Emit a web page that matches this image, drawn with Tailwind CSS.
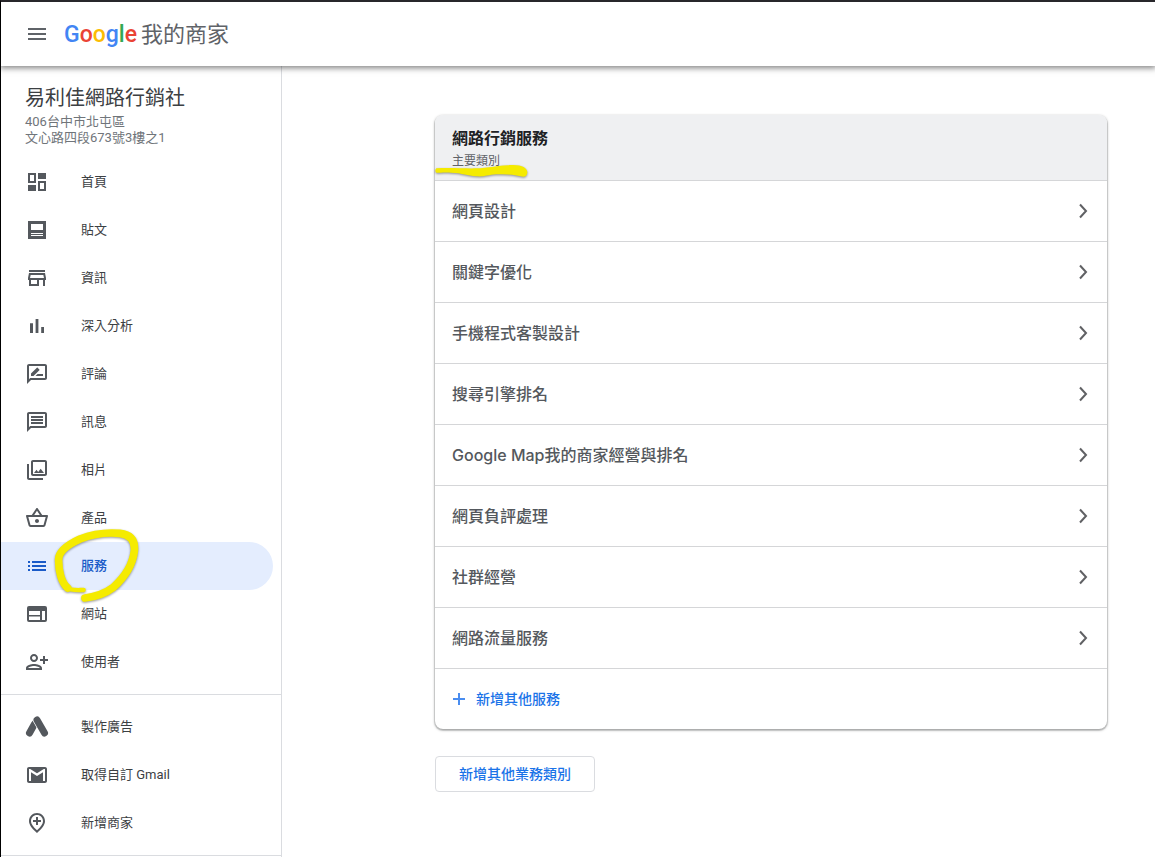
<!DOCTYPE html>
<html lang="zh-Hant">
<head>
    <meta charset="UTF-8">
    <meta name="viewport" content="width=device-width, initial-scale=1.0">
    <title>Google 我的商家</title>
    <script src="https://cdn.jsdelivr.net/npm/@tailwindcss/browser@4"></script>
</head>
<body class="min-h-screen flex flex-col bg-white border-t-2 border-l border-t-[#28272b] border-l-black font-[Roboto,'Noto_Sans_CJK_TC',sans-serif] text-[#3c4043]">
    <!-- Header -->
    <header class="relative z-10 flex items-center h-16 pl-6 bg-white shadow-[0_1px_6px_1px_rgba(0,0,0,0.5)]">
        <button type="button" aria-label="主選單" class="mr-[15px]">
            <svg class="w-6 h-6 fill-[#5f6368]" viewBox="0 0 24 24"><path d="M3 18h18v-2H3v2zm0-5h18v-2H3v2zm0-7v2h18V6H3z"/></svg>
        </button>
        <a href="#" class="flex items-center gap-1 pt-px">
            <span class="text-[23px] font-medium leading-8"><span class="text-[#4285f4]">G</span><span class="text-[#ea4335]">o</span><span class="text-[#fbbc04]">o</span><span class="text-[#4285f4]">g</span><span class="text-[#34a853]">l</span><span class="text-[#ea4335]">e</span></span>
            <span class="text-[22px] leading-8 text-[#5f6368]">我的商家</span>
        </a>
    </header>

    <div class="flex flex-1">
        <!-- Sidebar -->
        <aside class="w-[281px] shrink-0 border-r border-[#dadce0]">
            <div class="pt-4 pb-3 pl-6">
                <h1 class="text-xl leading-8">易利佳網路行銷社</h1>
                <p class="text-[13px] leading-4 text-[#70757a]">406台中市北屯區<br>文心路四段673號3樓之1</p>
            </div>

            <nav class="text-[13px]">
                <ul class="pb-2 border-b border-[#dadce0]">
                    <li><a href="#" class="flex items-center gap-8 h-12 pl-6">
                        <svg class="w-6 h-6 fill-[#54585d]" viewBox="0 0 24 24"><path d="M3 3h8v10H3zM5 5v6h4V5zM13 3h8v6h-8zM3 15h8v6H3zM13 11h8v10h-8zM15 13v6h4v-6z" fill-rule="evenodd"/></svg>
                        首頁
                    </a></li>
                    <li><a href="#" class="flex items-center gap-8 h-12 pl-6">
                        <svg class="w-6 h-6 fill-[#54585d]" viewBox="0 0 24 24"><path d="M3 3h18v18H3zM6 6v6h12V6zM6 15v1h12v-1zM6 17v1h12v-1z" fill-rule="evenodd"/></svg>
                        貼文
                    </a></li>
                    <li><a href="#" class="flex items-center gap-8 h-12 pl-6">
                        <svg class="w-6 h-6 fill-[#54585d]" viewBox="0 0 24 24"><path d="M18.36 9l.6 3H5.04l.6-3h12.72M20 4H4v2h16V4zm0 3H4l-1 5v2h1v6h10v-6h4v6h2v-6h1v-2l-1-5zM6 18v-4h6v4H6z"/></svg>
                        資訊
                    </a></li>
                    <li><a href="#" class="flex items-center gap-8 h-12 pl-6">
                        <svg class="w-6 h-6 fill-[#54585d]" viewBox="0 0 24 24"><path d="M5 9.2h3V19H5zM10.6 5h2.8v14h-2.8zm5.6 8H19v6h-2.8z"/></svg>
                        深入分析
                    </a></li>
                    <li><a href="#" class="flex items-center gap-8 h-12 pl-6">
                        <svg class="w-6 h-6 fill-[#54585d]" viewBox="0 0 24 24"><path d="M20 2H4c-1.1 0-1.99.9-1.99 2L2 22l4-4h14c1.1 0 2-.9 2-2V4c0-1.1-.9-2-2-2zm0 14H5.17L4 17.17V4h16v12zM10.5 14H18v-2h-5.5zM14.36 8.13c.2-.2.2-.51 0-.71l-1.77-1.77c-.2-.2-.51-.2-.71 0L6 11.53V14h2.47z"/></svg>
                        評論
                    </a></li>
                    <li><a href="#" class="flex items-center gap-8 h-12 pl-6">
                        <svg class="w-6 h-6 fill-[#54585d]" viewBox="0 0 24 24"><path d="M4 4h16v12H5.17L4 17.17V4m0-2c-1.1 0-1.99.9-1.99 2L2 22l4-4h14c1.1 0 2-.9 2-2V4c0-1.1-.9-2-2-2H4zm2 10h12v2H6v-2zm0-3h12v2H6V9zm0-3h12v2H6V6z"/></svg>
                        訊息
                    </a></li>
                    <li><a href="#" class="flex items-center gap-8 h-12 pl-6">
                        <svg class="w-6 h-6 fill-[#54585d]" viewBox="0 0 24 24"><path d="M20 4v12H8V4h12m0-2H8c-1.1 0-2 .9-2 2v12c0 1.1.9 2 2 2h12c1.1 0 2-.9 2-2V4c0-1.1-.9-2-2-2zm-8.5 9.67l1.69 2.26 2.48-3.1L19 15H9zM2 6v14c0 1.1.9 2 2 2h14v-2H4V6H2z"/></svg>
                        相片
                    </a></li>
                    <li><a href="#" class="flex items-center gap-8 h-12 pl-6">
                        <svg class="w-6 h-6 fill-[#54585d]" viewBox="0 0 24 24"><path d="M22 9h-4.79l-4.38-6.56c-.19-.28-.51-.42-.83-.42s-.64.14-.83.43L6.79 9H2c-.55 0-1 .45-1 1 0 .09.01.18.04.27l2.54 9.27c.23.84 1 1.46 1.92 1.46h13c.92 0 1.69-.62 1.93-1.46l2.54-9.27L23 10c0-.55-.45-1-1-1zM12 4.8L14.8 9H9.2L12 4.8zM18.5 19l-12.99.01L3.31 11H20.7l-2.2 8zM12 13c-1.1 0-2 .9-2 2s.9 2 2 2 2-.9 2-2-.9-2-2-2z"/></svg>
                        產品
                    </a></li>
                    <!-- Current page, circled by hand -->
                    <li class="relative">
                        <a href="#" aria-current="page" class="flex items-center gap-8 h-12 pl-6 mr-2 rounded-r-full bg-[#e4edfe] font-medium text-[#1a5bc8]">
                            <svg class="w-6 h-6 fill-[#1a5bc8]" viewBox="0 0 24 24"><path d="M3 13h2v-2H3v2zm0 4h2v-2H3v2zm0-8h2V7H3v2zm4 4h14v-2H7v2zm0 4h14v-2H7v2zM7 7v2h14V7H7z"/></svg>
                            服務
                        </a>
                        <svg class="absolute z-10 left-[51px] -top-[15px] w-[90px] h-20 pointer-events-none fill-none stroke-[#f5eb00] drop-shadow-[0_1px_1px_rgba(0,0,0,0.4)]" viewBox="156 20 270 240" stroke-linecap="round" stroke-linejoin="round">
                            <path stroke-width="23" d="M203 203C184 187 175 150 176 116C177 92 203 73 240 56C285 38 325 36 360 39C393 43 406 62 403 92C398 135 372 172 340 201C315 220 285 229 255 233"/>
                            <path stroke-width="13" d="M200 203C212 211 230 209 251 209"/>
                        </svg>
                    </li>
                    <li><a href="#" class="flex items-center gap-8 h-12 pl-6">
                        <svg class="w-6 h-6 fill-[#54585d]" viewBox="0 0 24 24"><path d="M4 4h16a2 2 0 0 1 2 2v12a2 2 0 0 1-2 2H4a2 2 0 0 1-2-2V6a2 2 0 0 1 2-2zM4 9v4h11V9zM4 14.5V18h11v-3.5zM17 9v9h3V9z" fill-rule="evenodd"/></svg>
                        網站
                    </a></li>
                    <li><a href="#" class="flex items-center gap-8 h-12 pl-6">
                        <svg class="w-6 h-6 fill-[#54585d]" viewBox="0 0 24 24"><path d="M13 8c0-2.21-1.79-4-4-4S5 5.79 5 8s1.79 4 4 4 4-1.79 4-4zm-2 0c0 1.1-.9 2-2 2s-2-.9-2-2 .9-2 2-2 2 .9 2 2zM1 18v2h16v-2c0-2.66-5.33-4-8-4s-8 1.34-8 4zm2 0c.2-.71 3.3-2 6-2 2.69 0 5.77 1.28 6 2H3zM20 14v-3h3V9h-3V6h-2v3h-3v2h3v3h2z"/></svg>
                        使用者
                    </a></li>
                </ul>

                <ul class="py-2 border-b border-[#dadce0]">
                    <li><a href="#" class="flex items-center gap-8 h-12 pl-6">
                        <svg class="w-6 h-6 fill-none" viewBox="0 0 24 24" stroke-linecap="round">
                            <path class="stroke-[#54585d]" stroke-width="7" d="M9.5 9L4.5 18"/>
                            <path class="stroke-white" stroke-width="8.5" d="M12 5L19.5 18"/>
                            <path class="stroke-[#54585d]" stroke-width="7" d="M12 5L19.5 18"/>
                        </svg>
                        製作廣告
                    </a></li>
                    <li><a href="#" class="flex items-center gap-8 h-12 pl-6">
                        <svg class="w-6 h-6 fill-[#54585d]" viewBox="0 0 24 24"><path d="M20 4H4c-1.1 0-2 .9-2 2v12c0 1.1.9 2 2 2h16c1.1 0 2-.9 2-2V6c0-1.1-.9-2-2-2zm0 14h-2V9.25L12 13 6 9.25V18H4V6h1.2l6.8 4.25L18.8 6H20v12z"/></svg>
                        取得自訂 Gmail
                    </a></li>
                    <li><a href="#" class="flex items-center gap-8 h-12 pl-6">
                        <svg class="w-6 h-6 fill-[#54585d]" viewBox="0 0 24 24"><path d="M13 6v3h3v2h-3v3h-2v-3H8V9h3V6h2zm5 4.2C18 6.57 15.35 4 12 4s-6 2.57-6 6.2c0 2.34 1.95 5.44 6 9.14 4.05-3.7 6-6.8 6-9.14zM12 2c4.2 0 8 3.22 8 8.2 0 3.32-2.67 7.25-8 11.8-5.33-4.55-8-8.48-8-11.8C4 5.22 7.8 2 12 2z"/></svg>
                        新增商家
                    </a></li>
                </ul>
            </nav>
        </aside>

        <!-- Services -->
        <main class="flex-1 pt-[49px] pl-[153px] pr-12">
            <section class="rounded-lg bg-white shadow-[0_1px_0_1px_rgba(60,64,67,0.12),0_1px_3px_rgba(0,0,0,0.4)]">
                <div class="relative pt-3 pb-2 pl-[17px] rounded-t-lg bg-[#eff0f2] border-b border-[#d5d6d8]">
                    <h2 class="pt-px text-base leading-[22px] font-bold text-[#202124]">網路行銷服務</h2>
                    <p class="text-xs leading-[22px] text-[#5f6368]">主要類別</p>
                    <svg class="absolute -left-px top-12 w-[97px] h-4 overflow-visible pointer-events-none fill-[#f5eb00] drop-shadow-[0_1px_1px_rgba(0,0,0,0.4)]" viewBox="24 174 291 48">
                        <path d="M31 190C70 187 115 191 150 190C185 190 220 180 262 180C290 180 305 190 304 203C302 215 294 217 284 214C258 207 232 207 210 208C185 210 175 216 150 214C125 212 110 204 75 203C55 202 45 204 31 203C27 199 27 193 31 190z"/>
                    </svg>
                </div>
                <ul class="text-base font-medium text-[#54585d] font-[Inter,'Noto_Sans_CJK_TC',sans-serif]">
                    <li class="border-b border-[#d5d6d8]"><a href="#" class="flex items-center justify-between h-15 pl-[17px] pr-3">
                        網頁設計
                        <svg class="w-6 h-6 fill-none stroke-[#606164]" viewBox="0 0 24 24" stroke-width="2"><path d="M9 5.5l6 6.5-6 6.5"/></svg>
                    </a></li>
                    <li class="border-b border-[#d5d6d8]"><a href="#" class="flex items-center justify-between h-15 pl-[17px] pr-3">
                        關鍵字優化
                        <svg class="w-6 h-6 fill-none stroke-[#606164]" viewBox="0 0 24 24" stroke-width="2"><path d="M9 5.5l6 6.5-6 6.5"/></svg>
                    </a></li>
                    <li class="border-b border-[#d5d6d8]"><a href="#" class="flex items-center justify-between h-15 pl-[17px] pr-3">
                        手機程式客製設計
                        <svg class="w-6 h-6 fill-none stroke-[#606164]" viewBox="0 0 24 24" stroke-width="2"><path d="M9 5.5l6 6.5-6 6.5"/></svg>
                    </a></li>
                    <li class="border-b border-[#d5d6d8]"><a href="#" class="flex items-center justify-between h-15 pl-[17px] pr-3">
                        搜尋引擎排名
                        <svg class="w-6 h-6 fill-none stroke-[#606164]" viewBox="0 0 24 24" stroke-width="2"><path d="M9 5.5l6 6.5-6 6.5"/></svg>
                    </a></li>
                    <li class="border-b border-[#d5d6d8]"><a href="#" class="flex items-center justify-between h-15 pl-[17px] pr-3">
                        Google Map我的商家經營與排名
                        <svg class="w-6 h-6 fill-none stroke-[#606164]" viewBox="0 0 24 24" stroke-width="2"><path d="M9 5.5l6 6.5-6 6.5"/></svg>
                    </a></li>
                    <li class="border-b border-[#d5d6d8]"><a href="#" class="flex items-center justify-between h-15 pl-[17px] pr-3">
                        網頁負評處理
                        <svg class="w-6 h-6 fill-none stroke-[#606164]" viewBox="0 0 24 24" stroke-width="2"><path d="M9 5.5l6 6.5-6 6.5"/></svg>
                    </a></li>
                    <li class="border-b border-[#d5d6d8]"><a href="#" class="flex items-center justify-between h-15 pl-[17px] pr-3">
                        社群經營
                        <svg class="w-6 h-6 fill-none stroke-[#606164]" viewBox="0 0 24 24" stroke-width="2"><path d="M9 5.5l6 6.5-6 6.5"/></svg>
                    </a></li>
                    <li class="border-b border-[#d5d6d8]"><a href="#" class="flex items-center justify-between h-15 pl-[17px] pr-3">
                        網路流量服務
                        <svg class="w-6 h-6 fill-none stroke-[#606164]" viewBox="0 0 24 24" stroke-width="2"><path d="M9 5.5l6 6.5-6 6.5"/></svg>
                    </a></li>
                </ul>
                <button type="button" class="flex items-center gap-[9px] w-full h-15 pl-4 text-sm font-medium text-[#1a73e8]">
                    <svg class="w-4 h-4 fill-none stroke-[#4a8df0]" viewBox="0 0 16 16" stroke-width="2"><path d="M8 2v12M2 8h12"/></svg>
                    新增其他服務
                </button>
            </section>

            <button type="button" class="mt-[27px] h-9 px-[23px] rounded border border-[#dadce0] text-sm font-medium text-[#1a73e8]">新增其他業務類別</button>
        </main>
    </div>
</body>
</html>
